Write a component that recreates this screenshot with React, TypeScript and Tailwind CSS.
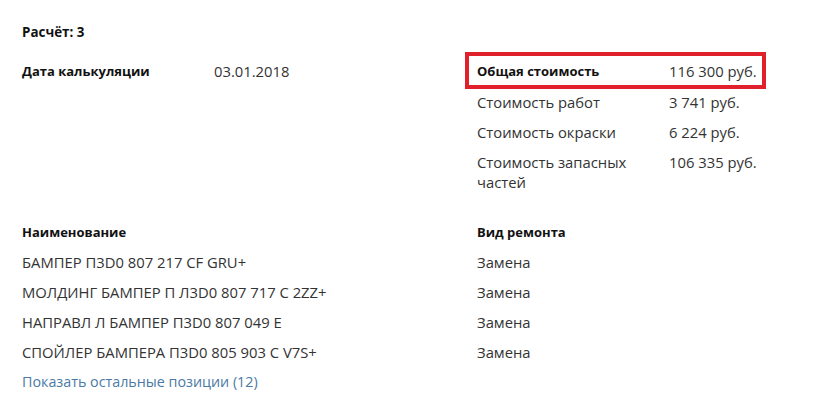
export default function App() {
  const costs = [
    { label: 'Стоимость работ', value: '3 741 руб.' },
    { label: 'Стоимость окраски', value: '6 224 руб.' },
    { label: 'Стоимость запасных частей', value: '106 335 руб.' },
  ]
  const parts = [
    'БАМПЕР П3D0 807 217 CF GRU+',
    'МОЛДИНГ БАМПЕР П Л3D0 807 717 C 2ZZ+',
    'НАПРАВЛ Л БАМПЕР П3D0 807 049 E',
    'СПОЙЛЕР БАМПЕРА П3D0 805 903 C V7S+',
  ]

  return (
    <div className="min-h-screen bg-white pl-[22px] pt-[22px] text-[14.8px] leading-[20px] text-[#333] font-['Open_Sans',sans-serif]">
      <div className="font-bold text-[13.4px] text-[#111]">Расчёт: 3</div>

      {/* Summary */}
      <div className="mt-[10px] grid grid-cols-[443px_301px]">
        <div className="grid grid-cols-[192px_1fr] items-center h-[37px]">
          <div className="font-bold text-[13px] text-[#111]">Дата калькуляции</div>
          <div>03.01.2018</div>
        </div>

        <div>
          <div className="border-4 border-[#e0212b] pl-2 pr-1 py-[4.5px] grid grid-cols-[192px_1fr]">
            <div className="font-bold text-[13px] text-[#111]">Общая стоимость</div>
            <div className="whitespace-nowrap">116 300 руб.</div>
          </div>
          <div className="mt-[3px] flex flex-col gap-[10px] pl-3">
            {costs.map((c) => (
              <div key={c.label} className="grid grid-cols-[192px_1fr]">
                <div className="pr-6">{c.label}</div>
                <div className="whitespace-nowrap">{c.value}</div>
              </div>
            ))}
          </div>
        </div>
      </div>

      {/* Parts */}
      <div className="mt-[30px] grid grid-cols-[455px_1fr] gap-y-[10px]">
        <div className="font-bold text-[13px] text-[#111]">Наименование</div>
        <div className="font-bold text-[13px] text-[#111]">Вид ремонта</div>
        {parts.map((p) => (
          <>
            <div key={p}>{p}</div>
            <div key={p + '-type'}>Замена</div>
          </>
        ))}
        <a href="#" className="text-[14.3px] text-[#4a7aa5] col-span-2">
          Показать остальные позиции (12)
        </a>
      </div>
    </div>
  )
}
